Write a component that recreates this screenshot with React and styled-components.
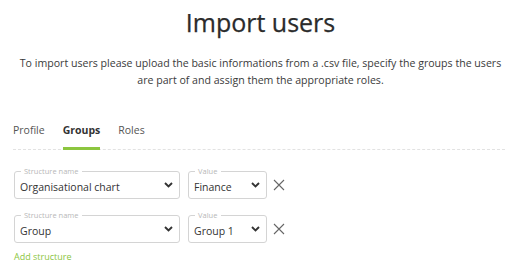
import React from "react";
import styled, { createGlobalStyle } from "styled-components";

const Global = createGlobalStyle`
  html, body { margin: 0; padding: 0; background: #fff; }
  body { font-family: "Open Sans", "Liberation Sans", sans-serif; color: #333; }
  * { box-sizing: border-box; }
`;

const Page = styled.div`
  width: 521px;
  padding: 0 14px 0 14px;
`;

const Title = styled.h1`
  margin: 0;
  padding-top: 4px;
  text-align: center;
  font-size: 25px;
  font-weight: 400;
  line-height: 36px;
  color: #2b2b2b;
  -webkit-text-stroke: 0.25px #2b2b2b;
`;

const Intro = styled.p`
  margin: 15px 0 0;
  text-align: center;
  font-size: 10.6px;
  line-height: 17px;
  color: #3a3a3a;
  white-space: nowrap;
`;

const Tabs = styled.nav`
  display: flex;
  gap: 18px;
  margin-top: 33px;
  margin-left: -1px;
  border-bottom: 1px dashed #e2e2e2;
  width: 492px;
`;

const Tab = styled.div`
  font-size: 10.5px;
  line-height: 16px;
  padding: 0 0 9px;
  color: ${(p) => (p.$active ? "#333" : "#555")};
  font-weight: ${(p) => (p.$active ? 700 : 400)};
  border-bottom: 3px solid ${(p) => (p.$active ? "#8cc63f" : "transparent")};
  margin-bottom: -1px;
`;

const Rows = styled.div`
  display: flex;
  flex-direction: column;
  gap: 16px;
  margin-top: 21px;
`;

const Row = styled.div`
  display: flex;
  align-items: center;
  gap: 8px;
`;

const Box = styled.div`
  position: relative;
  border: 1px solid #d4d4d4;
  border-radius: 3px;
  width: ${(p) => p.$w}px;
  height: 28px;
  padding: 3px 6px 0 5px;
  display: flex;
  align-items: center;
  justify-content: space-between;
`;

const Label = styled.span`
  position: absolute;
  top: -5px;
  left: 6px;
  padding: 0 4px 0 3px;
  background: #fff;
  font-size: 7.5px;
  line-height: 8px;
  color: #b8b8b8;
`;

const Value = styled.span`
  font-size: 10.5px;
  color: #333;
`;

const Chevron = () => (
  <svg width="9" height="6" viewBox="0 0 9 6" style={{ marginTop: -3 }}>
    <path d="M1 1 L4.5 4.5 L8 1" fill="none" stroke="#333" strokeWidth="1.9" />
  </svg>
);

const Remove = styled.button`
  border: 0;
  background: none;
  padding: 0;
  margin: 0 0 0 -2px;
  display: flex;
`;

const AddLink = styled.a`
  display: block;
  margin-top: 7px;
  font-size: 9px;
  line-height: 14px;
  color: #8cc63f;
  text-decoration: none;
`;

function Select({ label, value, w }) {
  return (
    <Box $w={w}>
      <Label>{label}</Label>
      <Value>{value}</Value>
      <Chevron />
    </Box>
  );
}

const X = () => (
  <svg width="12" height="12" viewBox="0 0 12 12">
    <path d="M1 1 L11 11 M11 1 L1 11" stroke="#666" strokeWidth="1.1" />
  </svg>
);

export default function App() {
  const rows = [
    ["Organisational chart", "Finance"],
    ["Group", "Group 1"],
  ];
  return (
    <Page>
      <Global />
      <Title>Import users</Title>
      <Intro>
        To import users please upload the basic informations from a .csv file, specify the groups the users
        <br />
        are part of and assign them the appropriate roles.
      </Intro>
      <Tabs>
        <Tab>Profile</Tab>
        <Tab $active>Groups</Tab>
        <Tab>Roles</Tab>
      </Tabs>
      <Rows>
        {rows.map(([s, v]) => (
          <Row key={s}>
            <Select label="Structure name" value={s} w={166} />
            <Select label="Value" value={v} w={79} />
            <Remove aria-label="remove">
              <X />
            </Remove>
          </Row>
        ))}
      </Rows>
      <AddLink href="#">Add structure</AddLink>
    </Page>
  );
}
